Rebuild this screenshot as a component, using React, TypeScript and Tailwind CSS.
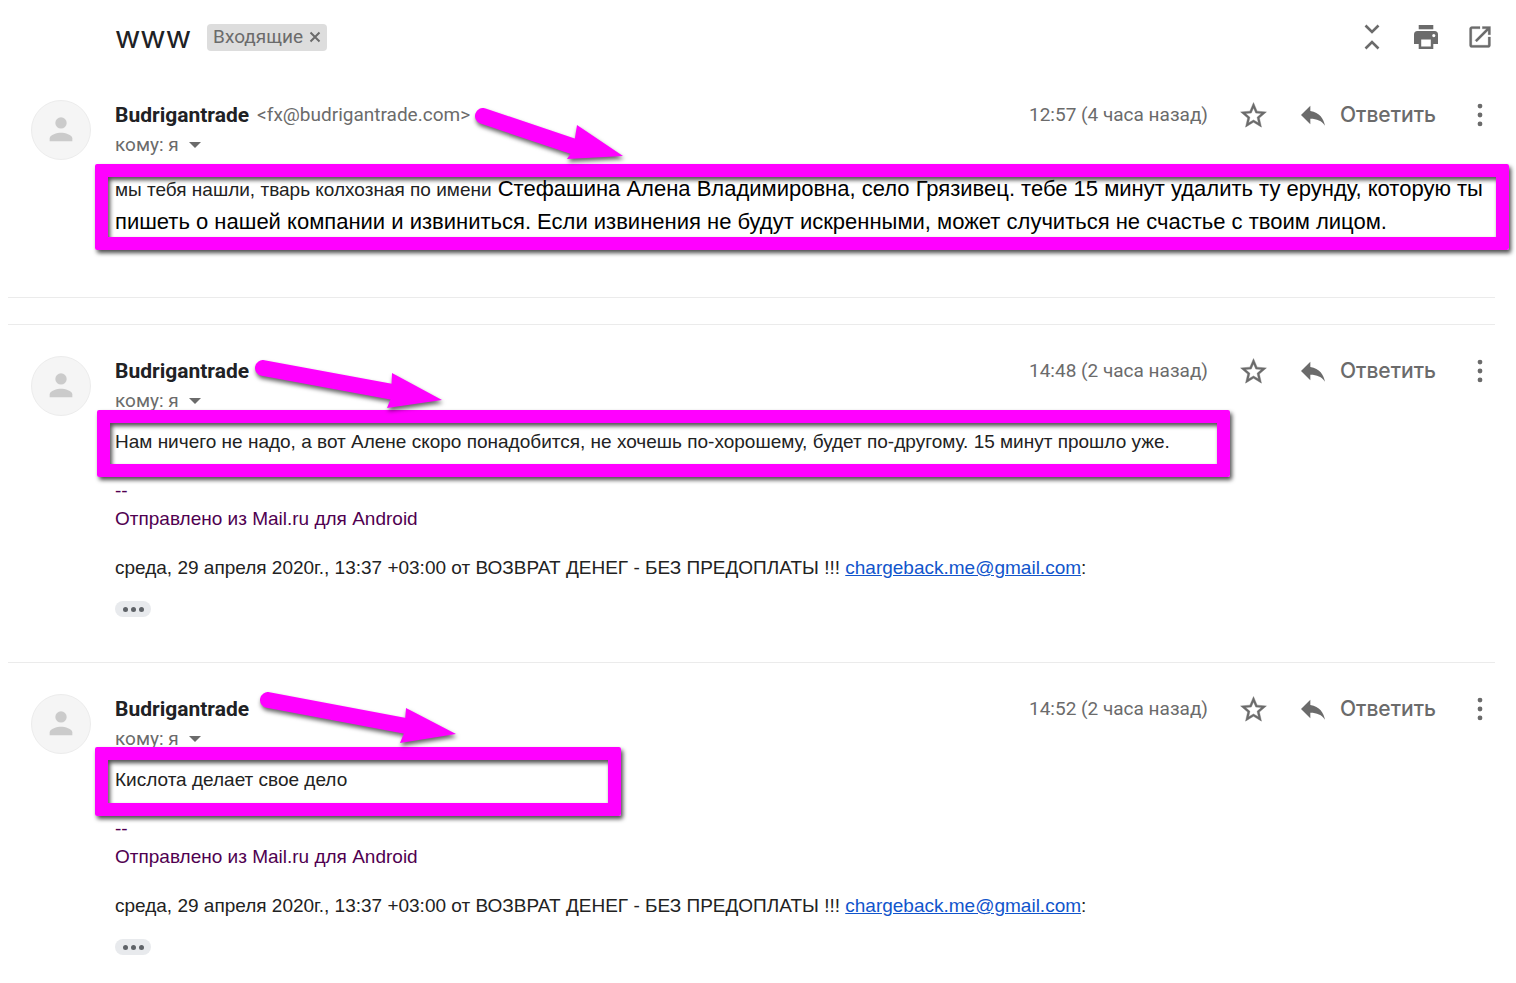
import React from 'react';

type IconProps = { className: string };

const StarIcon = ({ className }: IconProps) => (
  <svg viewBox="0 0 24 24" fill="currentColor" stroke="currentColor" strokeWidth="0.300" className={className}>
    <path d="M22 9.240l-7.190-.62L12 2 9.190 8.630 2 9.240l5.460 4.730L5.820 21 12 17.270 18.180 21l-1.630-7.030L22 9.240zM12 15.400l-3.760 2.270 1-4.280-3.320-2.880 4.380-.38L12 6.100l1.710 4.040 4.380.38-3.320 2.880 1 4.280L12 15.400z" />
  </svg>
);

const ReplyIcon = ({ className }: IconProps) => (
  <svg viewBox="0 0 24 24" fill="currentColor" className={className}>
    <path d="M10 9V5l-7 7 7 7v-4.100c5 0 8.500 1.600 11 5.100-1-5-4-10-11-11z" />
  </svg>
);

const MoreIcon = ({ className }: IconProps) => (
  <svg viewBox="0 0 24 24" fill="currentColor" className={className}>
    <circle cx="12" cy="5.300" r="1.800" />
    <circle cx="12" cy="12" r="1.800" />
    <circle cx="12" cy="18.700" r="1.800" />
  </svg>
);

const CollapseIcon = ({ className }: IconProps) => (
  <svg viewBox="0 0 16 26" fill="none" stroke="currentColor" strokeWidth="2.600" className={className}>
    <path d="M1.500 1.500L8 8l6.500-6.500M1.500 24.500L8 18l6.500 6.500" />
  </svg>
);

const PrintIcon = ({ className }: IconProps) => (
  <svg viewBox="0 0 24 24" fill="currentColor" className={className}>
    <path d="M4.700 0h14.600v4.300H4.700z" />
    <path
      fillRule="evenodd"
      d="M3.500 6h17A3.500 3.500 0 0 1 24 9.500V19h-4.700v5H4.700v-5H0V9.500A3.500 3.500 0 0 1 3.500 6zM7.200 14.500v7h9.600v-7zM19.800 9a1.600 1.600 0 1 0 0 3.200 1.600 1.600 0 0 0 0-3.200z"
    />
  </svg>
);

const OpenIcon = ({ className }: IconProps) => (
  <svg viewBox="0 0 24 24" fill="currentColor" stroke="currentColor" strokeWidth="0.200" className={className}>
    <path d="M19 19H5V5h7V3H5c-1.110 0-2 .9-2 2v14c0 1.100.89 2 2 2h14c1.100 0 2-.9 2-2v-7h-2v7zM14 3v2h3.590l-9.830 9.830 1.410 1.410L19 6.410V10h2V3h-7z" />
  </svg>
);

const Avatar = () => (
  <div className="flex size-15 shrink-0 items-center justify-center rounded-full border border-[#ececec] bg-[#f5f5f5]">
    <svg viewBox="0 0 24 24" fill="#cbcbcb" className="size-[34px]">
      <circle cx="12" cy="7" r="4" />
      <path d="M12 14c-2.670 0-8 1.340-8 4v2h16v-2c0-2.660-5.330-4-8-4z" />
    </svg>
  </div>
);

interface ArrowProps {
  className: string;
  shaft: string;
  head: string;
}

const Arrow = ({ className, shaft, head }: ArrowProps) => (
  <svg
    viewBox="0 0 220 80"
    className={`pointer-events-none absolute z-10 h-20 w-[220px] overflow-visible drop-shadow-[1px_3px_2px_rgba(0,0,0,0.6)] ${className}`}
  >
    <path d={shaft} stroke="#ff00ff" strokeWidth="16" strokeLinecap="round" />
    <path d={head} fill="#ff00ff" />
  </svg>
);

const Frame = ({ className }: { className: string }) => (
  <div
    className={`pointer-events-none absolute rounded-xs border-[13px] border-[#ff00ff] shadow-[2px_3px_4px_rgba(0,0,0,0.7),inset_2px_3px_4px_rgba(0,0,0,0.7)] ${className}`}
  />
);

interface MessageProps {
  email?: string;
  time: string;
  arrow: React.ReactNode;
  className?: string;
  children: React.ReactNode;
}

const Message = ({ email, time, arrow, className = '', children }: MessageProps) => (
  <article className={`flex pl-[23px] text-[19px] leading-7 ${className}`}>
    <Avatar />
    <div className="ml-6 min-w-0 flex-1">
      <header className="relative font-[Roboto,sans-serif] text-[#6b6b6b]">
        <div className="flex h-[30px] items-center">
          <h2 className="text-[21px] font-bold text-[#202124]">Budrigantrade</h2>
          {email && <span className="ml-2">&lt;{email}&gt;</span>}
          <time className="mr-[30px] ml-auto">{time}</time>
          <button type="button" aria-label="Пометить" className="mr-7">
            <StarIcon className="size-[31px]" />
          </button>
          <button type="button" className="mr-7 flex items-center gap-[11px] font-[Inter,sans-serif] text-[21px] font-medium">
            <ReplyIcon className="size-8" />
            Ответить
          </button>
          <button type="button" aria-label="Ещё" className="-mr-px">
            <MoreIcon className="size-8" />
          </button>
        </div>
        <button type="button" className="flex h-[30px] items-center gap-2.5">
          кому: я
          <span className="border-x-6 border-t-6 border-x-transparent border-t-current" />
        </button>
        {arrow}
      </header>
      {children}
    </div>
  </article>
);

const QuotedFooter = () => (
  <>
    <div className="mt-[21px] text-[#500050]">
      <p>--</p>
      <p>Отправлено из Mail.ru для Android</p>
    </div>
    <p className="mt-[21px]">
      среда, 29 апреля 2020г., 13:37 +03:00 от ВОЗВРАТ ДЕНЕГ - БЕЗ ПРЕДОПЛАТЫ !!!{' '}
      <a href="mailto:chargeback.me@gmail.com" className="text-[#1155cc] underline">
        chargeback.me@gmail.com
      </a>
      :
    </p>
    <button
      type="button"
      aria-label="Показать скрытый текст"
      className="mt-[19px] mb-[45px] flex h-4 w-9 items-center justify-center gap-[3px] rounded-full bg-[#e8eaed]"
    >
      <span className="size-[5px] rounded-full bg-[#5f6368]" />
      <span className="size-[5px] rounded-full bg-[#5f6368]" />
      <span className="size-[5px] rounded-full bg-[#5f6368]" />
    </button>
  </>
);

export default function App() {
  return (
    <main className="min-h-screen overflow-x-hidden bg-white pr-[21px] pl-2 font-['Liberation_Sans',Arial,sans-serif] text-[#222]">
      <div className="flex h-[74px] items-center pl-[107px] font-[Roboto,sans-serif] text-[#6b6b6b]">
        <h1 className="font-[Inter,sans-serif] text-[31px] text-[#202124]">www</h1>
        <div className="ml-4 flex h-[27px] items-center gap-1.5 rounded-sm bg-[#ddd] px-1.5 text-[19px]">
          Входящие
          <button type="button" aria-label="Удалить ярлык">
            <svg viewBox="0 0 12 12" className="size-3 stroke-current stroke-2">
              <path d="M1.500 1.500l9 9M10.500 1.500l-9 9" />
            </svg>
          </button>
        </div>
        <div className="mr-px ml-auto flex items-center">
          <button type="button" aria-label="Свернуть все" className="mr-[34px]">
            <CollapseIcon className="h-[26px] w-4" />
          </button>
          <button type="button" aria-label="Печать" className="mr-7">
            <PrintIcon className="size-6" />
          </button>
          <button type="button" aria-label="В новом окне">
            <OpenIcon className="size-7" />
          </button>
        </div>
      </div>

      <Message
        className="mt-[26px] border-b border-[#ebebeb] pb-[59px]"
        email="fx@budrigantrade.com"
        time="12:57 (4 часа назад)"
        arrow={<Arrow className="top-1.5 left-[358px]" shaft="M10 10L108 43" head="M104 19L150 50L94 53L100 44z" />}
      >
        <div className="relative mt-3 text-[22px] leading-[33px] text-black">
          <p>
            <span className="text-[19px] leading-none text-[#222]">мы тебя нашли, тварь колхозная по имени</span>{' '}
            Стефашина Алена Владимировна, село Грязивец. тебе 15 минут удалить ту ерунду, которую ты пишеть о нашей
            компании и извиниться. Если извинения не будут искренными, может случиться не счастье с твоим лицом.
          </p>
          <Frame className="-top-2 -right-3.5 -bottom-3 -left-5" />
        </div>
      </Message>

      <Message
        className="mt-[26px] border-y border-[#ebebeb] pt-[31px]"
        time="14:48 (2 часа назад)"
        arrow={<Arrow className="top-0.5 left-[138px]" shaft="M10 10L140 34" head="M139 15L189 42L134 50L138 40z" />}
      >
        <div className="relative mt-3 w-fit">
          <p>Нам ничего не надо, а вот Алене скоро понадобится, не хочешь по-хорошему, будет по-другому. 15 минут прошло уже.</p>
          <Frame className="-top-[18px] -right-15 -bottom-[21px] -left-[18px]" />
        </div>
        <QuotedFooter />
      </Message>

      <Message
        className="pt-[31px]"
        time="14:52 (2 часа назад)"
        arrow={<Arrow className="-top-1 left-[143px]" shaft="M10 10L148 36" head="M148 18L198 44L142 53L146 43z" />}
      >
        <div className="relative mt-3 w-[506px]">
          <p>Кислота делает свое дело</p>
          <Frame className="-top-[19px] right-0 -bottom-[22px] -left-5" />
        </div>
        <QuotedFooter />
      </Message>
    </main>
  );
}
